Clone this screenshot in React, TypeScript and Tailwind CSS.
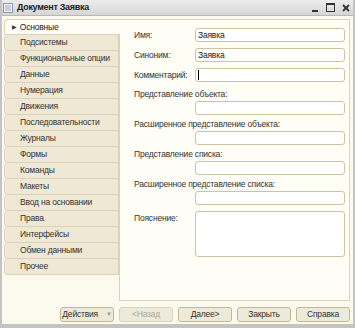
import React from 'react';

const tabs = [
  'Основные',
  'Подсистемы',
  'Функциональные опции',
  'Данные',
  'Нумерация',
  'Движения',
  'Последовательности',
  'Журналы',
  'Формы',
  'Команды',
  'Макеты',
  'Ввод на основании',
  'Права',
  'Интерфейсы',
  'Обмен данными',
  'Прочее',
];

const Field = ({ value, caret }: { value?: string; caret?: boolean }) => (
  <div className="h-[14px] flex-1 rounded-[3px] border border-[#cdc4a2] bg-white px-[2px] flex items-center text-[#222]">
    {value}
    {caret && <span className="w-px h-[10px] bg-black" />}
  </div>
);

const Button = ({ label, disabled, menu }: { label: string; disabled?: boolean; menu?: boolean }) => (
  <div
    className={
      'w-[54px] h-[15px] rounded-[3px] border flex items-center justify-center gap-[8px] bg-[#eeead9] ' +
      (disabled ? 'border-[#d8d2bc] text-[#aaa69a]' : 'border-[#c2b993] text-[#333]')
    }
  >
    <span>{label}</span>
    {menu && <span className="text-[6px] text-[#999]">▼</span>}
  </div>
);

const App = () => {
  return (
    <div
      className="w-[355px] h-[328px] flex flex-col bg-[#fcfaee] border-x-2 border-b-[4px] border-[#c4c4c4] text-[8.5px] tracking-[-0.2px] leading-[11px] text-[#333] overflow-hidden"
      style={{ fontFamily: '"Liberation Sans", Arial, sans-serif' }}
    >
      {/* Title bar */}
      <div className="h-[16px] shrink-0 flex items-center justify-between bg-gradient-to-b from-[#ececec] to-[#d6d6d6] border-b border-[#b8b8b8] -mx-[2px] px-[3px]">
        <div className="flex items-center gap-[4px]">
          <svg width="10" height="10" viewBox="0 0 10 10">
            <rect x="0.5" y="0.5" width="9" height="9" fill="#f4f6fa" stroke="#8a96a8" />
            <line x1="2" y1="3" x2="8" y2="3" stroke="#9aa6b8" />
            <line x1="2" y1="5" x2="8" y2="5" stroke="#9aa6b8" />
            <line x1="2" y1="7" x2="8" y2="7" stroke="#9aa6b8" />
          </svg>
          <span className="font-bold text-[#222] text-[9px] tracking-[-0.3px]">Документ Заявка</span>
        </div>
        <div className="flex items-center gap-[7px] pr-[2px]">
          <svg width="7" height="8" viewBox="0 0 7 8">
            <rect x="0" y="6" width="6" height="2" fill="#333" />
          </svg>
          <svg width="9" height="9" viewBox="0 0 9 9">
            <rect x="0.5" y="0.5" width="8" height="8" fill="none" stroke="#333" />
            <rect x="0.5" y="0.5" width="8" height="1.5" fill="#333" />
          </svg>
          <svg width="8" height="8" viewBox="0 0 8 8">
            <path d="M1 1 L7 7 M7 1 L1 7" stroke="#333" strokeWidth="1.8" />
          </svg>
        </div>
      </div>

      {/* Body */}
      <div className="flex-1 flex flex-col pl-[2px] pr-[3px] pt-[3px]">
        <div className="flex h-[282px]">
          {/* Tabs */}
          <div className="w-[115px] shrink-0 flex flex-col">
            {tabs.map((t, i) =>
              i === 0 ? (
                <div
                  key={t}
                  className="relative z-10 -mr-px h-[16px] flex items-center gap-[3px] pl-[7px] rounded-tl-[4px] border border-r-0 border-[#dad3b9] bg-[#fffef6] text-[#222]"
                >
                  <span className="text-[6px] text-[#333]">▶</span>
                  <span>{t}</span>
                </div>
              ) : (
                <div
                  key={t}
                  className="h-[16px] flex items-center pl-[15px] rounded-l-[4px] border border-t-0 border-[#dad3b9] bg-[#efe8d5] text-[#333] whitespace-nowrap"
                >
                  {t}
                </div>
              )
            )}
          </div>

          {/* Panel */}
          <div className="flex-1 border border-[#dad3b9] bg-[#fffef6] pl-[14px] pr-[4px] pt-[8px] flex flex-col">
            <div className="flex flex-col gap-[6px]">
              <div className="flex items-center">
                <span className="w-[61px]">Имя:</span>
                <Field value="Заявка" />
              </div>
              <div className="flex items-center">
                <span className="w-[61px]">Синоним:</span>
                <Field value="Заявка" />
              </div>
              <div className="flex items-center">
                <span className="w-[61px]">Комментарий:</span>
                <Field caret />
              </div>
            </div>

            {[
              'Представление объекта:',
              'Расширенное представление объекта:',
              'Представление списка:',
              'Расширенное представление списка:',
            ].map((l, i) => (
              <div key={l} className={'flex flex-col ' + (i === 0 ? 'mt-[7px]' : 'mt-[4px]')}>
                <span className="h-[12px]">{l}</span>
                <div className="flex pl-[61px]">
                  <Field />
                </div>
              </div>
            ))}

            <div className="flex mt-[6px]">
              <span className="w-[61px] pt-[2px]">Пояснение:</span>
              <div className="flex-1 h-[46px] rounded-[3px] border border-[#cdc4a2] bg-white" />
            </div>
          </div>
        </div>

        {/* Footer */}
        <div className="flex justify-end gap-[5px] mt-[6px]">
          <Button label="Действия" menu />
          <Button label="<Назад" disabled />
          <Button label="Далее>" />
          <Button label="Закрыть" />
          <Button label="Справка" />
        </div>
      </div>
    </div>
  );
};

export default App;
